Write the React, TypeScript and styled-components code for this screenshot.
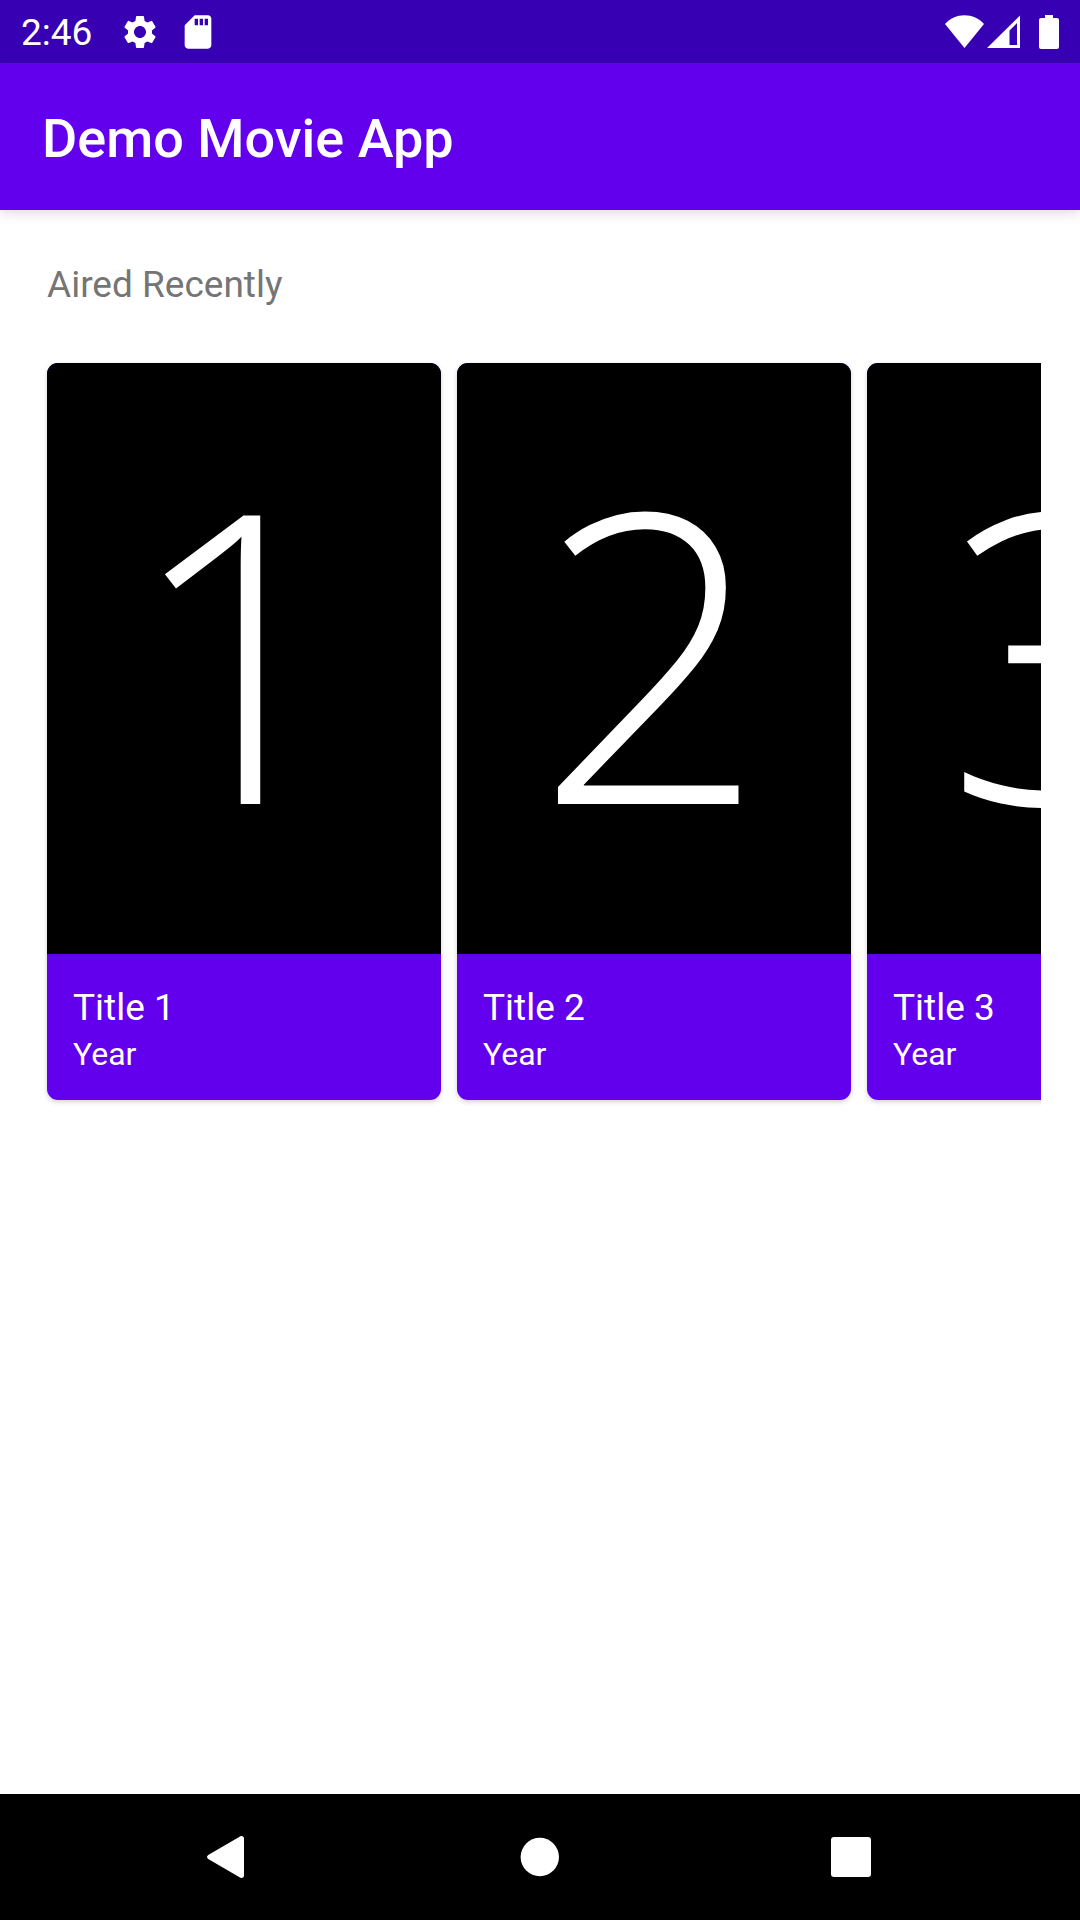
import React from "react";
import styled, { createGlobalStyle } from "styled-components";
import { MdSdCard, MdSettings } from "react-icons/md";

const GlobalStyle = createGlobalStyle`
  *, *::before, *::after {
    box-sizing: border-box;
  }
  body {
    margin: 0;
    background: #ffffff;
    font-family: Roboto, "Liberation Sans", sans-serif;
  }
`;

const Screen = styled.div`
  display: flex;
  flex-direction: column;
  min-height: 100vh;
`;

const StatusBar = styled.div`
  display: flex;
  align-items: center;
  justify-content: space-between;
  height: 63px;
  padding: 0 21px;
  background: #3700b3;
  color: #ffffff;
`;

const StatusGroup = styled.div<{ $gap: number }>`
  display: flex;
  align-items: center;
  gap: ${(p) => p.$gap}px;
`;

const Clock = styled.time`
  padding: 2px 10px 0 0;
  font-size: 37px;
  line-height: 44px;
`;

const AppBar = styled.header`
  display: flex;
  align-items: center;
  height: 147px;
  padding: 4px 42px 0;
  background: #6200ee;
  color: #ffffff;
  box-shadow: 0 3px 12px rgba(0, 0, 0, 0.14);
`;

const AppTitle = styled.h1`
  margin: 0;
  font-size: 54px;
  font-weight: 500;
  line-height: 62px;
`;

const Content = styled.main`
  flex: 1;
  min-width: 0;
  padding: 53px 39px;
`;

const SectionTitle = styled.h2`
  margin: 0;
  padding: 0 8px;
  color: #757575;
  font-size: 37px;
  font-weight: 400;
  line-height: 44px;
`;

const MovieList = styled.ul`
  display: flex;
  gap: 16px;
  margin: 48px 0 0;
  padding: 8px;
  overflow: hidden;
  list-style: none;
`;

const MovieCard = styled.li`
  flex: 0 0 394px;
  overflow: hidden;
  border-radius: 11px;
  background: #6200ee;
  color: #ffffff;
  box-shadow: 0 2px 5px rgba(0, 0, 0, 0.18);
`;

const Poster = styled.div`
  display: flex;
  align-items: center;
  justify-content: center;
  aspect-ratio: 2 / 3;
  padding: 0 6px 24px 0;
  background: #000000;
  font-family: "Open Sans", "Noto Sans", sans-serif;
  font-size: 404px;
  font-weight: 300;
  line-height: 1;
`;

const Caption = styled.div`
  padding: 32px 26px 27px;
`;

const MovieTitle = styled.h3`
  margin: 0 0 5px;
  font-size: 37px;
  font-weight: 400;
  line-height: 44px;
`;

const MovieYear = styled.p`
  margin: 0;
  font-size: 32px;
  line-height: 38px;
`;

const NavBar = styled.nav`
  display: flex;
  justify-content: center;
  gap: 105px;
  height: 126px;
  background: #000000;
`;

const NavButton = styled.button`
  display: flex;
  align-items: center;
  justify-content: center;
  width: 210px;
  padding: 0;
  border: 0;
  background: transparent;
  color: #ffffff;
`;

const WifiIcon = () => (
  <svg width="39" height="34" viewBox="0 0 39 34" fill="currentColor" aria-hidden="true">
    <path d="M19.5 33 0 9C5 3.500 12 .3 19.500 .3S34 3.500 39 9Z" />
  </svg>
);

const SignalIcon = () => (
  <svg width="33" height="34" viewBox="0 0 33 34" fill="currentColor" aria-hidden="true">
    <path fillRule="evenodd" d="M33 .5V33H0ZM30 8 22.500 15.500V30H30Z" />
  </svg>
);

const BatteryIcon = () => (
  <svg width="20" height="34" viewBox="0 0 20 34" fill="currentColor" aria-hidden="true">
    <path d="M6 0h8v3h4a2 2 0 0 1 2 2v27a2 2 0 0 1-2 2H2a2 2 0 0 1-2-2V5a2 2 0 0 1 2-2h4Z" />
  </svg>
);

const BackIcon = () => (
  <svg width="42" height="42" viewBox="0 0 42 42" fill="currentColor" aria-hidden="true">
    <path d="M4.200 19 36 .4C38 -.6 40 .4 40 2.500V39.500C40 41.600 38 42.600 36 41.600L4.200 23C2.600 22 2.600 20 4.200 19Z" />
  </svg>
);

const HomeIcon = () => (
  <svg width="42" height="42" viewBox="0 0 42 42" fill="currentColor" aria-hidden="true">
    <circle cx="20.800" cy="21" r="19.200" />
  </svg>
);

const RecentsIcon = () => (
  <svg width="48" height="42" viewBox="0 0 48 42" fill="currentColor" aria-hidden="true">
    <rect x="0" y="1" width="40" height="40" rx="3" />
  </svg>
);

const movies = [
  { id: "1", title: "Title 1", year: "Year" },
  { id: "2", title: "Title 2", year: "Year" },
  { id: "3", title: "Title 3", year: "Year" },
];

export default function App() {
  return (
    <Screen>
      <GlobalStyle />
      <StatusBar>
        <StatusGroup $gap={18}>
          <Clock>2:46</Clock>
          <MdSettings size={40} />
          <MdSdCard size={40} />
        </StatusGroup>
        <StatusGroup $gap={3}>
          <WifiIcon />
          <StatusGroup $gap={19}>
            <SignalIcon />
            <BatteryIcon />
          </StatusGroup>
        </StatusGroup>
      </StatusBar>
      <AppBar>
        <AppTitle>Demo Movie App</AppTitle>
      </AppBar>
      <Content>
        <SectionTitle>Aired Recently</SectionTitle>
        <MovieList>
          {movies.map((movie) => (
            <MovieCard key={movie.id}>
              <Poster>{movie.id}</Poster>
              <Caption>
                <MovieTitle>{movie.title}</MovieTitle>
                <MovieYear>{movie.year}</MovieYear>
              </Caption>
            </MovieCard>
          ))}
        </MovieList>
      </Content>
      <NavBar aria-label="System">
        <NavButton type="button" aria-label="Back">
          <BackIcon />
        </NavButton>
        <NavButton type="button" aria-label="Home">
          <HomeIcon />
        </NavButton>
        <NavButton type="button" aria-label="Recent apps">
          <RecentsIcon />
        </NavButton>
      </NavBar>
    </Screen>
  );
}
